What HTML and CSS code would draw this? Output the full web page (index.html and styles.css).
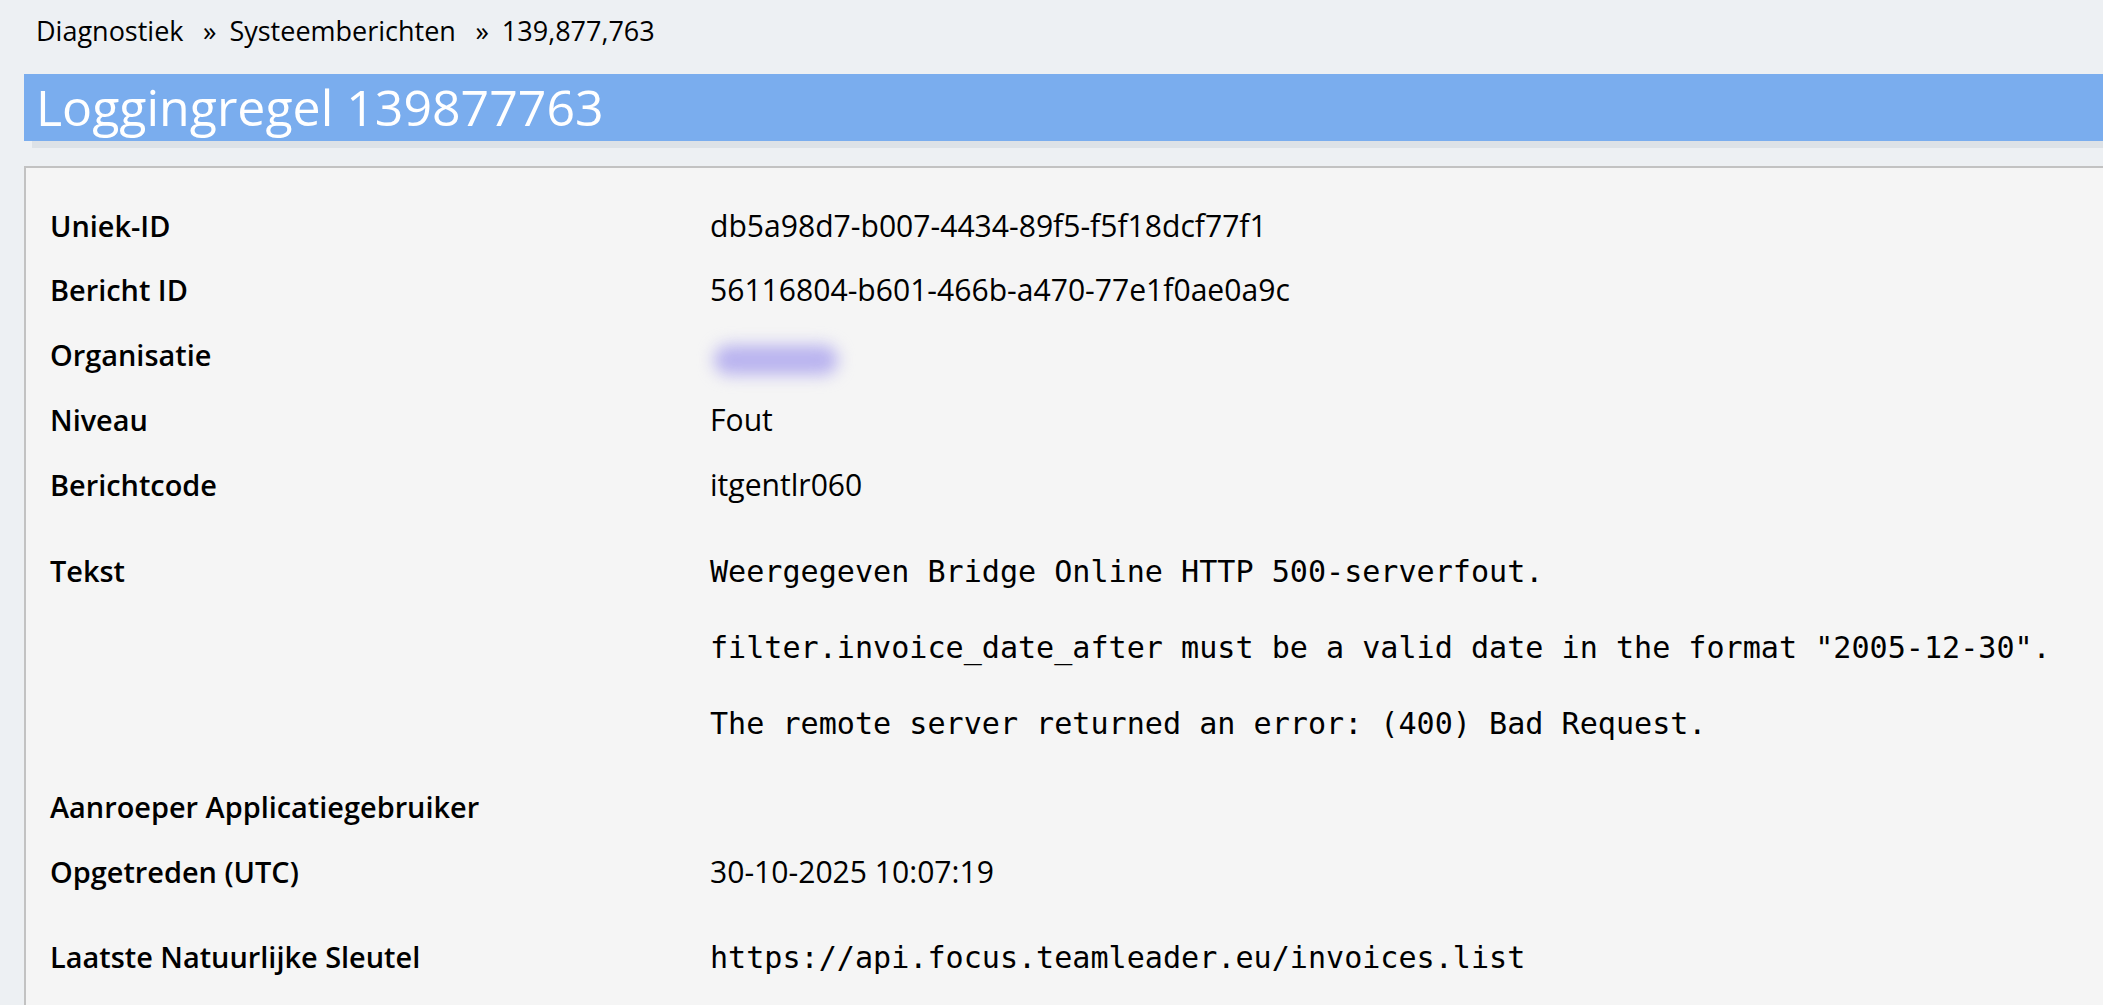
FILE: index.html
```html
<!DOCTYPE html>
<html lang="nl">
<head>
<meta charset="utf-8">
<title>Loggingregel 139877763</title>
<link rel="stylesheet" href="styles.css">
</head>
<body>
<div class="page">
  <nav class="breadcrumb">
    <span class="crumb">Diagnostiek</span><span class="sep">»</span><span class="crumb">Systeemberichten</span><span class="sep">»</span><span class="crumb">139,877,763</span>
  </nav>
  <h1 class="title">Loggingregel 139877763</h1>
  <section class="panel">
    <div class="row"><div class="label">Uniek-ID</div><div class="value">db5a98d7-b007-4434-89f5-f5f18dcf77f1</div></div>
    <div class="row"><div class="label">Bericht ID</div><div class="value">56116804-b601-466b-a470-77e1f0ae0a9c</div></div>
    <div class="row"><div class="label">Organisatie</div><div class="value"><span class="redacted"></span></div></div>
    <div class="row"><div class="label">Niveau</div><div class="value">Fout</div></div>
    <div class="row"><div class="label">Berichtcode</div><div class="value">itgentlr060</div></div>
    <div class="row row-mono row-text"><div class="label">Tekst</div>
      <div class="value mono-lines">
        <div class="mono">Weergegeven Bridge Online HTTP 500-serverfout.</div>
        <div class="mono">filter.invoice_date_after must be a valid date in the format "2005-12-30".</div>
        <div class="mono">The remote server returned an error: (400) Bad Request.</div>
      </div>
    </div>
    <div class="row"><div class="label">Aanroeper Applicatiegebruiker</div><div class="value"></div></div>
    <div class="row"><div class="label">Opgetreden (UTC)</div><div class="value">30-10-2025 10:07:19</div></div>
    <div class="row row-mono row-key"><div class="label">Laatste Natuurlijke Sleutel</div>
      <div class="value mono-lines"><div class="mono">https://api.focus.teamleader.eu/invoices.list</div></div>
    </div>
  </section>
</div>
</body>
</html>
```
FILE: styles.css
```css
html, body {
  margin: 0;
  padding: 0;
  background: #edf0f3;
  color: #000;
  font-family: "Open Sans", "Liberation Sans", sans-serif;
  overflow: hidden;
}

.page {
  padding-left: 24px;
}

.breadcrumb {
  padding-top: 12px;
  padding-left: 12px;
  font-size: 27px;
  line-height: normal;
  white-space: nowrap;
}

.sep {
  margin-left: 19.5px;
  margin-right: 13px;
}

.title {
  margin: 25px 0 0 0;
  background: #7aadee;
  color: #fff;
  font-weight: 400;
  font-size: 50px;
  line-height: 67px;
  padding-left: 12px;
  box-shadow: 8px 7px 0 #dde2e7;
  white-space: nowrap;
}

.panel {
  margin-top: 25px;
  background: #f5f5f5;
  border-top: 2px solid #c2c2c2;
  border-left: 2px solid #c2c2c2;
  padding: 25px 0 60px 24px;
  min-height: 900px;
}

.row {
  display: grid;
  grid-template-columns: 660px 1fr;
  align-items: baseline;
  padding: 11.5px 0 11.3px;
  line-height: 42px;
}

.row-text {
  padding-top: 33px;
  padding-bottom: 32px;
}

.row-key {
  padding-top: 31.5px;
  padding-bottom: 32px;
}

.label {
  font-weight: 600;
  font-size: 28.9px;
  white-space: nowrap;
}

.value {
  font-size: 30.1px;
  white-space: nowrap;
}

.mono-lines {
  display: flex;
  flex-direction: column;
  gap: 38px;
}

.mono {
  font-family: "DejaVu Sans Mono", "Liberation Mono", monospace;
  font-size: 30.1px;
  line-height: 38px;
}

.redacted {
  display: inline-block;
  width: 124px;
  height: 30px;
  vertical-align: -9px;
  margin-left: 4px;
  border-radius: 15px;
  background: #b9b3ef;
  filter: blur(8px);
}
```
